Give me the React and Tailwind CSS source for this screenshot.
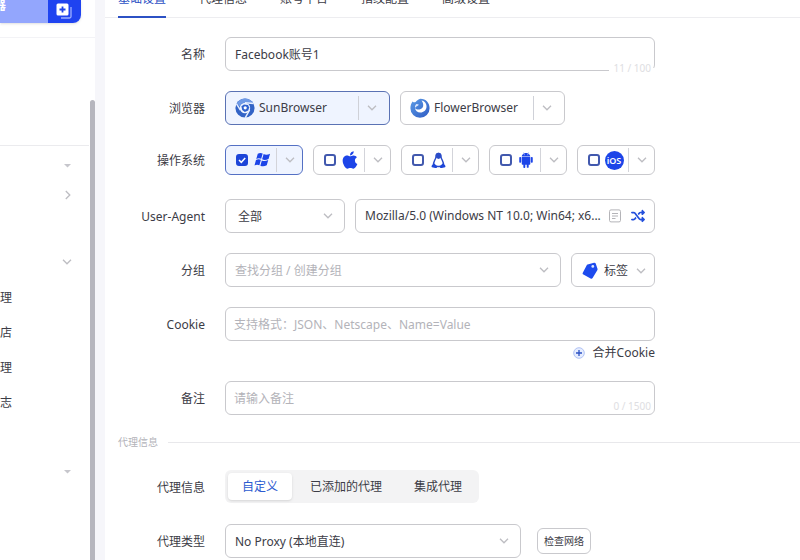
import { FaApple } from "react-icons/fa";
import { AiFillAndroid } from "react-icons/ai";
import { FaShuffle } from "react-icons/fa6";

const TABS = ["基础设置", "代理信息", "账号平台", "指纹配置", "高级设置"];
const PROXY_MODES = ["自定义", "已添加的代理", "集成代理"];

function SunLogo() {
  return (
    <svg viewBox="0 0 20 20" className="size-5 shrink-0" aria-hidden="true">
      <circle cx="10" cy="10" r="9.6" fill="#3263c6" />
      <path d="M1.900 5A9.600 9.600 0 0 1 18.300 5.200L10 4.800A5 5 0 0 0 5.200 9z" fill="#6f9ae6" />
      <path d="M10 4.800l8.600.6M5.400 12.200L1.400 5.600M14.600 12l-4.400 7.800" stroke="#e6eeff" strokeWidth="1.500" fill="none" />
      <circle cx="10" cy="10" r="5.200" fill="#eef4ff" />
      <path d="M6.400 8.200L9 6.500l4 .4 1.200 2.700-1 2.900-3.400 1.600-2.600-2z" fill="#2f62cf" />
      <circle cx="10.200" cy="9.800" r="1.600" fill="#fff" />
    </svg>
  );
}

function FlowerLogo() {
  return (
    <svg viewBox="0 0 20 20" className="size-5 shrink-0" aria-hidden="true">
      <defs>
        <linearGradient id="flower" x1="0" y1="0" x2="1" y2="1">
          <stop offset="0" stopColor="#5b9be6" />
          <stop offset="1" stopColor="#2f5cc4" />
        </linearGradient>
      </defs>
      <path d="M2.600 3.400C3.400 4.400 4.400 4.600 5.600 4 7.400 2.400 8.200 1.200 10.400.8 16 .8 19.600 5 19.600 10.200a9.600 9.600 0 0 1-19.200 0C.4 7.600 1.200 5.200 2.600 3.400z" fill="url(#flower)" />
      <path d="M11.500 2.600c3.400.6 5.300 3.400 5 6.400-.3 3.200-2.900 5.500-6.100 5.500-3 0-5.200-1.900-5.400-4.500 1.300 1.500 3.400 1.900 5.200 1.200 2.200-.8 3.200-2.400 3-4.400-.1-1.600-.7-3-1.700-4.200z" fill="#fff" />
      <path d="M5 10c-.3-1.700.3-3.100 1.500-4l2.200.6c-.2 1-1 1.400-1.900 1.700-.7.300-1.400.8-1.800 1.700z" fill="#dfeaff" />
    </svg>
  );
}

function WindowsIcon() {
  return (
    <svg viewBox="0 0 18 16" className="w-[17px] shrink-0" fill="#1d45e8" aria-hidden="true">
      <path d="M4 1.800C5.800.8 7.600.8 9.200 1.600L7.600 7.200C6 6.400 4.200 6.400 2.400 7.400z" />
      <path d="M10.200 2.200c2 .9 4 .9 6.800-.4l-1.600 5.600c-2.400 1.200-4.600 1.300-6.800.4z" />
      <path d="M2.100 8.500c1.800-1 3.600-1 5.200-.2L5.700 14C4.100 13.200 2.300 13.200.5 14.200z" />
      <path d="M8.300 8.900c2 .9 4.200.8 6.800-.4l-1.600 5.600c-2.400 1.200-4.600 1.300-6.800.4z" />
    </svg>
  );
}

function LinuxIcon() {
  return (
    <svg viewBox="0 0 16 18" className="w-[15px] shrink-0" aria-hidden="true">
      <path d="M8 1.500c-1.700 0-2.600 1.200-2.600 3 0 2-.6 3-1.500 4.500-.8 1.500-1.300 3-1.300 5.500 1.500 1.300 9.300 1.300 10.800 0 0-2.500-.5-4-1.300-5.500-.9-1.500-1.500-2.500-1.500-4.500 0-1.800-.9-3-2.600-3z" fill="#fff" stroke="#2a4cc8" strokeWidth="1.500" />
      <path d="M5 4.300C5 2 6.200.8 8 .8s3 1.200 3 3.500l-.6 2L8 7.500 5.600 6.300z" fill="#2a4cc8" />
      <path d="M3.200 12L6.600 15.300c.4 1.400-.8 2.100-2 1.800L1 16.200c-.8-.4-.4-1 0-2z" fill="#1d45d8" />
      <path d="M12.800 12L9.400 15.300c-.4 1.400.8 2.100 2 1.800l3.600-.9c.8-.4.4-1 0-2z" fill="#1d45d8" />
    </svg>
  );
}

function IosIcon() {
  return (
    <span className="flex size-[19px] shrink-0 items-center justify-center rounded-full bg-[#1d45e8] text-[9px] leading-none font-semibold text-white">
      iOS
    </span>
  );
}

function TagIcon() {
  return (
    <svg viewBox="0 0 16 18" className="w-4 shrink-0" aria-hidden="true">
      <path d="M5.600 2.600L12 .8c.8-.2 1.400.1 1.700.8l1.800 5.200c.2.5.1 1-.2 1.500L10.600 16c-.5.8-1.200 1-2 .5L1.400 12.600c-.8-.4-1-1.100-.6-1.900L4.600 3.500c.2-.5.5-.7 1-.9z" fill="#1d4bee" />
      <circle cx="10.800" cy="4.400" r="1.400" fill="#dbe6ff" />
    </svg>
  );
}

function NoteIcon() {
  return (
    <svg viewBox="0 0 12 14" className="w-3 shrink-0" fill="none" stroke="#b4b4b8" strokeWidth="1" aria-hidden="true">
      <rect x=".5" y=".9" width="11" height="12" rx="1.500" />
      <path d="M3 4.500h6M3 7h6M3 9.500h3.500" />
    </svg>
  );
}

function NewBrowserIcon() {
  return (
    <svg viewBox="0 0 17 17" className="w-[17px]" aria-hidden="true">
      <path d="M15 4v9.500a1.500 1.500 0 0 1-1.500 1.500H5" fill="none" stroke="#9fb0ff" strokeWidth="1.300" />
      <rect x=".5" y=".5" width="12" height="12" rx="1.500" fill="#fff" />
      <path d="M6.500 3.500v6M3.500 6.500h6" stroke="#1f43e8" strokeWidth="1.800" />
    </svg>
  );
}

function Caret() {
  return (
    <svg viewBox="0 0 8 4" className="w-[7px]" aria-hidden="true">
      <path d="M0 0h8L4 4z" fill="#c6c6cc" />
    </svg>
  );
}

function Arrow() {
  return (
    <svg viewBox="0 0 10 6" className="w-2.5 shrink-0" fill="none" stroke="#bdbdc2" strokeWidth="1.300" aria-hidden="true">
      <path d="M1 .8l4 4 4-4" />
    </svg>
  );
}

function ArrowRight() {
  return (
    <svg viewBox="0 0 6 10" className="w-1.5 shrink-0" fill="none" stroke="#bdbdc2" strokeWidth="1.300" aria-hidden="true">
      <path d="M.8 1l4 4-4 4" />
    </svg>
  );
}

const OS_LIST = [
  { name: "Windows", icon: <WindowsIcon />, on: true },
  { name: "macOS", icon: <FaApple size={20} color="#1d45e8" className="shrink-0" /> },
  { name: "Linux", icon: <LinuxIcon /> },
  { name: "Android", icon: <AiFillAndroid size={18} color="#1d45e8" className="shrink-0" /> },
  { name: "iOS", icon: <IosIcon /> },
];

const BOX = "rounded-md border border-[#c9c9cd] bg-white";

function Row({ label, htmlFor, children }) {
  return (
    <div className="flex gap-5">
      <label htmlFor={htmlFor} className="flex h-[34px] w-[87px] shrink-0 items-center justify-end pt-0.5">
        {label}
      </label>
      <div className="w-full max-w-[430px] min-w-0">{children}</div>
    </div>
  );
}

function Select({ id, label, options, className = "", pad = "pl-[9px]", tone = "" }) {
  return (
    <div className={`relative ${className}`}>
      <select id={id} aria-label={label} className={`${BOX} h-[34px] w-full appearance-none pt-px pr-8 ${pad} ${tone}`}>
        {options.map((o) => (
          <option key={o}>{o}</option>
        ))}
      </select>
      <span className="pointer-events-none absolute inset-y-0 right-3 flex items-center">
        <Arrow />
      </span>
    </div>
  );
}

function BrowserCard({ name, logo, active }) {
  return (
    <div
      className={`flex h-[34px] w-[165px] items-center rounded-md border ${
        active ? "border-[#5a72b4] bg-[#eff4ff]" : "border-[#c9c9cd] bg-white"
      }`}
    >
      <button type="button" aria-pressed={active} className="flex h-full flex-1 items-center gap-1 pl-[9px]">
        {logo}
        {name}
      </button>
      <button type="button" aria-label={`${name} 版本`} className="flex h-6 w-[31px] items-center justify-center border-l border-[#cfd1d8] pr-1">
        <Arrow />
      </button>
    </div>
  );
}

function OsCard({ name, icon, on = false }) {
  return (
    <div
      className={`flex h-[30px] items-center rounded-md border ${
        on ? "border-[#5470c4] bg-[#eff4ff]" : "border-[#c9c9cd] bg-white"
      }`}
    >
      <label className="flex flex-1 items-center pl-2.5">
        <span className="relative flex">
          <input
            type="checkbox"
            aria-label={name}
            defaultChecked={on}
            className="peer size-3 appearance-none rounded-[3px] border-2 border-[#4259ae] bg-white checked:border-[#1d45d8] checked:bg-[#1d45d8]"
          />
          <svg viewBox="0 0 12 12" className="pointer-events-none absolute inset-0 hidden peer-checked:block" aria-hidden="true">
            <path d="M3 6l2.300 2.300L9.200 4" fill="none" stroke="#fff" strokeWidth="1.500" />
          </svg>
        </span>
        <span className="flex flex-1 items-center justify-center">{icon}</span>
      </label>
      <button type="button" aria-label={`${name} 版本`} className="flex h-6 w-[26px] items-center justify-center border-l border-[#d3d4da]">
        <Arrow />
      </button>
    </div>
  );
}

function Sidebar() {
  return (
    <aside className="relative w-[95px] shrink-0 bg-white">
      <div className="h-[38px] border-b border-[#f3f3f6]">
        <div className="flex h-[23px] w-[81px] overflow-hidden rounded-br-lg text-white shadow-sm">
          <button type="button" className="flex flex-1 bg-[#93a6fd] font-bold">
            <span className="flex h-[13px] w-1.5 items-end justify-end leading-[14px]">器</span>
          </button>
          <button type="button" aria-label="新建" className="flex w-[33px] justify-center bg-[#1f43f0]">
            <NewBrowserIcon />
          </button>
        </div>
      </div>
      <div className="mr-1.5 h-[108px] border-b border-[#ebebee]" />
      <nav>
        <button type="button" aria-label="展开分组" className="flex h-10 w-[71px] items-center justify-end">
          <Caret />
        </button>
        <button type="button" aria-label="展开" className="flex h-[18px] w-[71px] items-center justify-end">
          <ArrowRight />
        </button>
        <button type="button" aria-label="收起" className="mt-12 flex h-5 w-[72px] items-center justify-end">
          <Arrow />
        </button>
        <ul className="mt-2">
          {["理", "店", "理", "志"].map((t, i) => (
            <li key={i}>
              <a href="#" className="flex h-[35px] items-center">
                {t}
              </a>
            </li>
          ))}
        </ul>
        <button type="button" aria-label="展开更多" className="mt-[42px] flex h-5 w-[71px] items-center justify-end">
          <Caret />
        </button>
      </nav>
      <span className="absolute top-[100px] right-0 bottom-0 w-[5px] rounded-t-full bg-[#b6b6be]" />
    </aside>
  );
}

export default function App() {
  return (
    <div className="flex h-screen overflow-hidden bg-[#f6f6fa] font-['Noto_Sans','Noto_Sans_CJK_SC',sans-serif] text-[12px] leading-[18px] text-[#3c3c46]">
      <Sidebar />
      <main className="ml-2.5 min-w-0 flex-1 overflow-hidden bg-white">
        <nav className="flex h-[18px] items-end gap-[33px] overflow-hidden pl-[13px] shadow-[inset_0_-1px_0_#ededf0]">
          {TABS.map((t, i) => (
            <button
              key={t}
              type="button"
              className={`shrink-0 border-b-2 pb-2 ${i === 0 ? "border-[#2c51c4] text-[#2c51c4]" : "border-transparent"}`}
            >
              {t}
            </button>
          ))}
        </nav>

        <form className="flex flex-col gap-5 pt-[19px] pl-[13px]">
          <Row label="名称" htmlFor="name">
            <div className="relative">
              <input id="name" defaultValue="Facebook账号1" className={`${BOX} h-[34px] w-full px-[9px]`} />
              <span className="absolute right-0 bottom-0 h-[3px] w-[46px] bg-white" />
              <span className="absolute right-1 -bottom-1 text-[10px] leading-[14px] text-[#dedee2]">11 / 100</span>
            </div>
          </Row>

          <Row label="浏览器">
            <div className="flex gap-2.5">
              <BrowserCard name="SunBrowser" logo={<SunLogo />} active />
              <BrowserCard name="FlowerBrowser" logo={<FlowerLogo />} active={false} />
            </div>
          </Row>

          <div className="flex gap-5 pb-1">
            <span className="flex w-[87px] shrink-0 items-center justify-end pt-0.5">操作系统</span>
            <div className="grid w-full max-w-[430px] grid-cols-5 gap-2.5">
              {OS_LIST.map((os) => (
                <OsCard key={os.name} {...os} />
              ))}
            </div>
          </div>

          <Row label="User-Agent" htmlFor="ua">
            <div className="flex gap-2.5">
              <Select id="ua-scope" label="User-Agent 范围" options={["全部"]} className="w-[120px] shrink-0" pad="pl-3" />
              <div className={`${BOX} flex h-[34px] min-w-0 flex-1 items-center gap-1 pr-[9px] pl-[9px]`}>
                <input
                  id="ua"
                  readOnly
                  value="Mozilla/5.0 (Windows NT 10.0; Win64; x6..."
                  className="min-w-0 flex-1"
                />
                <button type="button" aria-label="查看">
                  <NoteIcon />
                </button>
                <button type="button" aria-label="随机" className="ml-1.5">
                  <FaShuffle size={14} color="#2450dc" />
                </button>
              </div>
            </div>
          </Row>

          <Row label="分组" htmlFor="group">
            <div className="flex gap-2.5">
              <Select id="group" label="分组" options={["查找分组 / 创建分组"]} className="min-w-0 flex-1" tone="text-[#b3b3b9]" />
              <button type="button" className={`${BOX} flex h-[34px] w-[84px] items-center gap-1.5 pt-px pl-2.5`}>
                <TagIcon />
                标签
                <span className="ml-0.5">
                  <Arrow />
                </span>
              </button>
            </div>
          </Row>

          <Row label="Cookie" htmlFor="cookie">
            <input
              id="cookie"
              placeholder="支持格式：JSON、Netscape、Name=Value"
              className={`${BOX} h-[34px] w-full px-2 placeholder:text-[#b3b3b9]`}
            />
            <button type="button" className="ml-auto flex h-5 items-center gap-2 pt-1">
              <svg viewBox="0 0 12 12" className="size-3" fill="none" aria-hidden="true">
                <circle cx="6" cy="6" r="5.300" fill="#e6edff" stroke="#a9bcf3" strokeWidth=".9" />
                <path d="M6 3v6M3 6h6" stroke="#2c51c4" strokeWidth="1.300" />
              </svg>
              合并Cookie
            </button>
          </Row>

          <Row label="备注" htmlFor="remark">
            <div className="relative">
              <input
                id="remark"
                placeholder="请输入备注"
                className={`${BOX} h-[34px] w-full px-2 placeholder:text-[#b3b3b9]`}
              />
              <span className="absolute right-1 bottom-0.5 text-[10px] leading-[14px] text-[#dedee2]">0 / 1500</span>
            </div>
          </Row>

          <div className="flex items-center gap-2.5 text-[10px] leading-[15px] text-[#b3b3b9]">
            代理信息
            <span className="h-px flex-1 bg-[#e8e8eb]" />
          </div>

          <Row label="代理信息">
            <div className="flex h-[33px] w-fit gap-1 rounded-md bg-[#f3f3f4] p-[3px]">
              {PROXY_MODES.map((m, i) => (
                <button
                  key={m}
                  type="button"
                  className={`rounded px-3.5 ${i === 0 ? "bg-white text-[#2c5bd0] shadow-sm" : ""}`}
                >
                  {m}
                </button>
              ))}
            </div>
          </Row>

          <Row label="代理类型" htmlFor="proxy-type">
            <div className="flex items-center gap-4">
              <Select id="proxy-type" label="代理类型" options={["No Proxy (本地直连)"]} className="w-[296px]" />
              <button type="button" className={`${BOX} h-[26px] w-[54px] shrink-0 text-[10px]`}>
                检查网络
              </button>
            </div>
          </Row>
        </form>
      </main>
    </div>
  );
}
